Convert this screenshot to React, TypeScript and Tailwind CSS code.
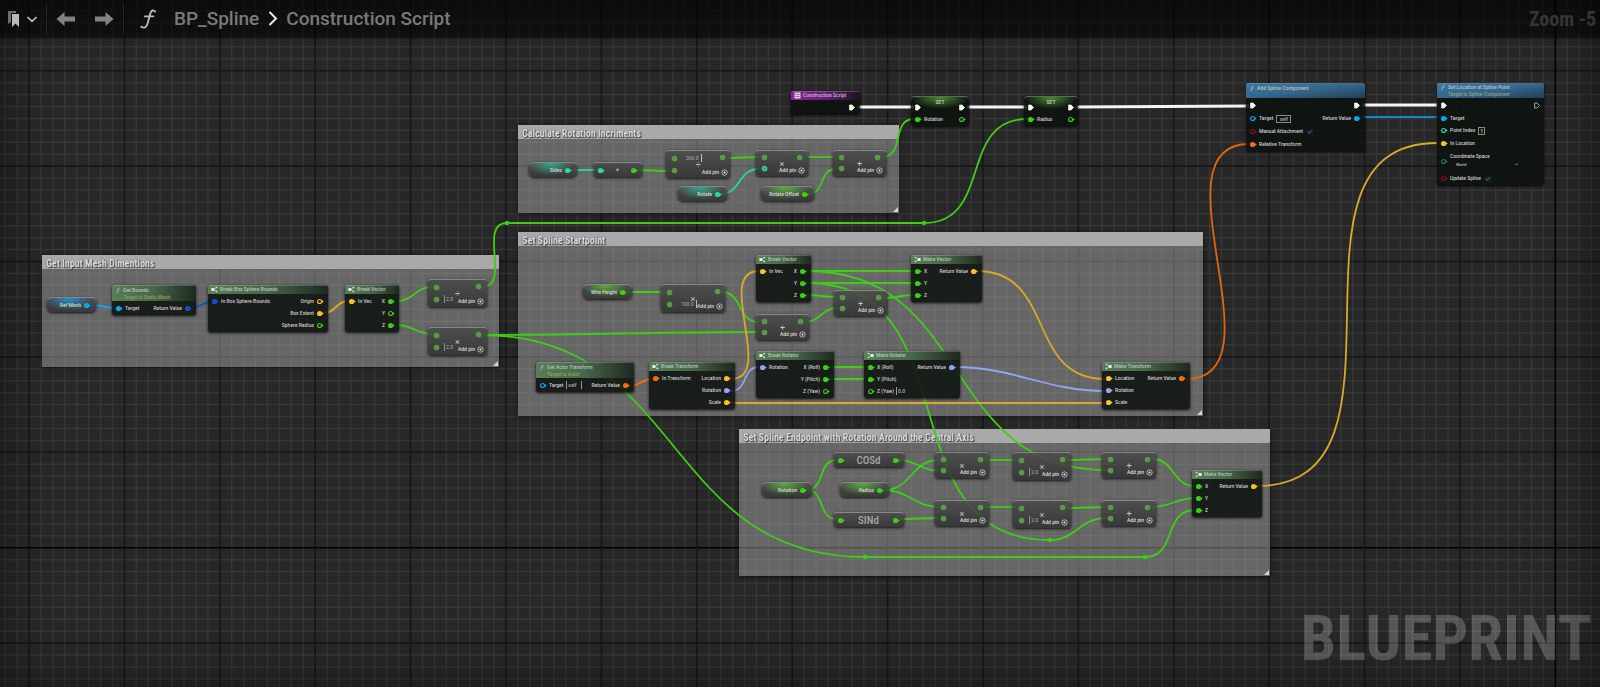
import { Check, ChevronDown } from 'lucide-react';
import type { ReactNode } from 'react';

const GREEN = '#3ccf13';
const TEAL = '#24d9a8';
const YELLOW = '#fbc226';
const WIRE_YELLOW = '#d9a928';
const PERIWINKLE = '#93a5f5';
const ORANGE = '#f56e0c';
const SKY = '#0da5f0';
const BLUE = '#0a56c8';
const RED = '#8c0b12';
const WHITE = '#f4f4f4';

type PinData = {
  label?: string;
  color: string;
  open?: boolean;
  exec?: boolean;
  field?: ReactNode;
};

type Row = { left?: PinData; right?: PinData };

// ---------- background grid ----------

const STEP = 11.925;

function Grid() {
  const lines = Array.from({ length: 320 }, (_, i) => i - 8);
  // the two origin axes are black, every eighth line is dark
  const tone = (i: number, axis: number) => (i === axis ? '#020202' : i % 8 === 0 ? '#171717' : '#363636');
  // thin lines first so the heavy ones stay on top
  const ordered = [...lines.filter((i) => i % 8 !== 0), ...lines.filter((i) => i % 8 === 0)];

  return (
    <svg className="absolute inset-0 h-full w-full" aria-hidden="true">
      {ordered.map((i) => (
        <g key={i} strokeWidth={i % 8 === 0 ? 1.6 : 1.5}>
          <line x1={29 + i * STEP} x2={29 + i * STEP} y1="0" y2="100%" stroke={tone(i, 128)} />
          <line x1="0" x2="100%" y1={70.7 + i * STEP} y2={70.7 + i * STEP} stroke={tone(i, 40)} />
        </g>
      ))}
    </svg>
  );
}

// ---------- wires ----------

type WireData = [x1: number, y1: number, x2: number, y2: number, color: string, width?: number];

const wires: WireData[] = [
  // exec line
  [858, 107, 914, 107, WHITE, 3],
  [967, 107, 1027, 107, WHITE, 3],
  [1076, 107, 1249, 106, WHITE, 3],
  [1363, 105, 1437, 105, WHITE, 3],
  [1362, 117, 1437, 117, '#118ac8'],
  // mesh dimensions
  [90, 305, 116, 308, SKY],
  [191, 308, 211, 302, BLUE],
  [324, 313, 348, 301, WIRE_YELLOW],
  [397, 301, 432, 287, GREEN],
  [397, 325, 432, 334, GREEN],
  [482, 287, 507, 223, GREEN],
  [507, 223, 924, 223, GREEN],
  [924, 223, 1027, 119, GREEN],
  [482, 335, 759, 332, GREEN],
  [482, 335, 865, 557, GREEN],
  [865, 557, 1145, 557, GREEN],
  [1145, 557, 1195, 510, GREEN],
  // rotation increments
  [571, 170, 598, 170, TEAL],
  [636, 170, 669, 171, GREEN],
  [726, 158, 759, 157, GREEN],
  [720, 194, 759, 169, TEAL],
  [804, 157, 836, 157, GREEN],
  [808, 194, 836, 169, GREEN],
  [882, 157, 914, 119, GREEN],
  // start point
  [627, 292, 664, 292, GREEN],
  [721, 292, 759, 322, GREEN],
  [805, 322, 837, 308, GREEN],
  [807, 271, 914, 271, GREEN],
  [807, 283, 914, 283, GREEN],
  [807, 295, 837, 297, GREEN],
  [883, 298, 914, 295, GREEN],
  [807, 271, 1106, 470, GREEN],
  [807, 283, 1050, 540, GREEN],
  [1050, 540, 1106, 518, GREEN],
  [630, 386, 652, 379, ORANGE],
  [731, 379, 759, 271, WIRE_YELLOW],
  [731, 391, 759, 367, PERIWINKLE],
  [731, 403, 1105, 403, WIRE_YELLOW],
  [830, 367, 866, 367, GREEN],
  [830, 379, 866, 379, GREEN],
  [977, 271, 1105, 379, WIRE_YELLOW],
  [955, 367, 1105, 391, PERIWINKLE],
  [1186, 379, 1249, 144, '#de660f'],
  // end point
  [806, 490, 837, 460, GREEN],
  [806, 490, 837, 519, GREEN],
  [899, 460, 939, 471, GREEN],
  [899, 519, 939, 518, GREEN],
  [884, 490, 939, 460, GREEN],
  [884, 490, 939, 507, GREEN],
  [985, 460, 1016, 460, GREEN],
  [985, 507, 1016, 507, GREEN],
  [1067, 460, 1106, 459, GREEN],
  [1067, 508, 1106, 507, GREEN],
  [1152, 459, 1195, 486, GREEN],
  [1152, 507, 1195, 498, GREEN],
  [1257, 486, 1437, 143, WIRE_YELLOW],
];

const knots = [
  [507, 223],
  [924, 223],
  [865, 557],
  [1145, 557],
  [1050, 540],
];

function wirePath([x1, y1, x2, y2]: WireData) {
  const t = (Math.abs(x2 - x1) + Math.abs(y2 - y1)) / 3;
  return `M${x1} ${y1} C${x1 + t} ${y1} ${x2 - t} ${y2} ${x2} ${y2}`;
}

function Wires() {
  return (
    <svg className="absolute inset-0 h-full w-full" aria-hidden="true">
      {wires.map((wire, i) => (
        <path key={i} d={wirePath(wire)} fill="none" stroke={wire[4]} strokeWidth={wire[5] ?? 1.8} />
      ))}
      {knots.map(([x, y]) => (
        <circle key={`${x}-${y}`} cx={x} cy={y} r="2.2" fill={GREEN} />
      ))}
    </svg>
  );
}

// ---------- pins ----------

function Pin({ color, open, exec }: { color: string; open?: boolean; exec?: boolean }) {
  if (exec) {
    return (
      <svg className="h-[7px] w-2 shrink-0" viewBox="0 0 8 7" aria-hidden="true">
        <path
          d="M1.6 1H4L6.5 3.5L4 6H1.6Z"
          fill={open ? 'none' : WHITE}
          stroke={open ? '#c4c4c4' : WHITE}
          strokeWidth="0.8"
          strokeLinejoin="round"
        />
      </svg>
    );
  }
  return (
    <svg className="h-[7px] w-2 shrink-0" viewBox="0 0 8 7" aria-hidden="true">
      <circle cx="3.6" cy="3.5" r={open ? 2 : 2.6} fill={open ? 'none' : color} stroke={color} strokeWidth={open ? 1.1 : 0} />
      <path d="M6 2.2L7.8 3.5L6 4.8Z" fill={color} />
    </svg>
  );
}

// wildcard style pin used by the compact math nodes
function MathPin({ color = '#45a92a' }: { color?: string }) {
  return (
    <svg className="h-[7px] w-[7px] shrink-0" viewBox="0 0 7 7" aria-hidden="true">
      <circle cx="3.5" cy="3.5" r="2.2" fill="#7d7d7d" stroke={color} strokeWidth="1.3" />
    </svg>
  );
}

// ---------- comment boxes ----------

const comments = [
  { title: 'Get Input Mesh Dimentions', x: 42, y: 255, w: 457, h: 112 },
  { title: 'Calculate Rotation Incriments', x: 518, y: 125, w: 381, h: 88 },
  { title: 'Set Spline Startpoint', x: 518, y: 232, w: 685, h: 184 },
  { title: 'Set Spline Endpoint with Rotation Around the Central Axis', x: 739, y: 429, w: 531, h: 147 },
];

function Comment({ title, x, y, w, h }: (typeof comments)[number]) {
  return (
    <section
      className="absolute flex flex-col bg-[#b4b4b4]/45 shadow-[0_1px_4px_rgba(0,0,0,0.7)]"
      style={{ left: x, top: y, width: w, height: h }}
    >
      <h2 className="h-[14px] bg-[#a9a9a9] px-1 pt-0.5 font-['Roboto_Condensed','Liberation_Sans_Narrow',Roboto,sans-serif] text-[10px] leading-[14px] font-bold whitespace-nowrap text-[#dedede] [text-shadow:1px_1px_1px_#333,0_0_1px_#444]">
        {title}
      </h2>
      <svg className="mt-auto mr-px mb-px h-[5px] w-[5px] self-end" viewBox="0 0 5 5" aria-hidden="true">
        <path d="M5 0V5H0Z" fill="#d6d6d6" />
      </svg>
    </section>
  );
}

// ---------- regular nodes ----------

function NodeIcon({ kind }: { kind: 'break' | 'make' | 'fn' | 'event' }) {
  if (kind === 'fn') {
    return (
      <svg className="h-[7px] w-[6px] shrink-0" viewBox="0 0 6 7" aria-hidden="true">
        <path d="M4.8 1C3.6 .6 3.3 1.6 3 3.2C2.7 5 2.4 6.3 1 6M1.7 3H4.4" fill="none" stroke="#8cc0d8" strokeWidth="0.8" />
      </svg>
    );
  }
  if (kind === 'event') {
    return (
      <svg className="h-[7px] w-[7px] shrink-0" viewBox="0 0 7 7" aria-hidden="true">
        <rect x="0.5" y="0.5" width="6" height="6" fill="#e3cfe8" />
        <path d="M1.5 2.5H5.5M1.5 4.5H5.5" stroke="#8d4a9c" strokeWidth="0.8" />
      </svg>
    );
  }
  return (
    <svg className="h-[7px] w-[7px] shrink-0" viewBox="0 0 7 7" aria-hidden="true">
      {kind === 'break' ? (
        <g fill="#f4f4f4">
          <rect x="0.4" y="2.1" width="3" height="2.8" />
          <path d="M3.4 3.2L5 1.6M3.4 3.8L5 5.4" stroke="#f4f4f4" strokeWidth="0.6" />
          <rect x="4.8" y="0.9" width="1.3" height="1.3" />
          <rect x="4.8" y="4.8" width="1.3" height="1.3" />
        </g>
      ) : (
        <g fill="#f4f4f4">
          <rect x="3.6" y="2.1" width="3" height="2.8" />
          <path d="M3.6 3.2L2 1.6M3.6 3.8L2 5.4" stroke="#f4f4f4" strokeWidth="0.6" />
          <rect x="0.8" y="0.9" width="1.3" height="1.3" />
          <rect x="0.8" y="4.8" width="1.3" height="1.3" />
        </g>
      )}
    </svg>
  );
}

const headTones = {
  green: 'bg-linear-to-r from-[#587f57] via-[#47664a] to-[#1d2a1e]',
  blue: 'bg-linear-to-br from-[#3f789f] via-[#35658b] to-[#1f3f57]',
  purple: 'bg-linear-to-r from-[#8b1fa4] via-[#6b1b7e] to-[#1c1020]',
};

const shell = 'rounded-[2px] bg-[#0c120e]/86 text-[5px] leading-[7px] font-medium text-[#cecece] shadow-[0_1px_3px_rgba(0,0,0,0.9)]';

type NodeData = {
  title: string;
  subtitle?: string;
  kind: 'break' | 'make' | 'fn' | 'event';
  tone?: keyof typeof headTones;
  x: number;
  y: number;
  w: number;
  rows: Row[];
};

function BlueprintNode({ title, subtitle, kind, tone = 'green', x, y, w, rows }: NodeData) {
  const blue = tone === 'blue';
  const height = blue ? 'h-[15px] pt-px' : subtitle ? 'h-4 pt-px' : 'h-[9px]';
  return (
    <article className={`absolute ${shell} ${blue ? '' : 'pb-px'}`} style={{ left: x, top: y, width: w }}>
      <header className={`flex items-start gap-0.5 rounded-t-[2px] border-t border-white/20 pr-1 pl-[3px] ${height} ${headTones[tone]}`}>
        <NodeIcon kind={kind} />
        <h3 className="whitespace-nowrap text-[#b9c4b9]">
          {title}
          {subtitle && <small className="block text-[5px] text-[#93a05e]">{subtitle}</small>}
        </h3>
      </header>
      <div className="pt-px">
        {rows.map((row, i) => (
          <div key={i} className={`flex items-center justify-between pr-1 pl-[3px] ${blue ? 'h-[13px]' : 'h-3'}`}>
            <div className="flex items-center gap-0.5 whitespace-nowrap">
              {row.left && <Pin {...row.left} />}
              {row.left?.label && <span>{row.left.label}</span>}
              {row.left?.field}
            </div>
            <div className="flex items-center gap-0.5 whitespace-nowrap">
              {row.right?.label && <span>{row.right.label}</span>}
              {row.right && <Pin {...row.right} />}
            </div>
          </div>
        ))}
      </div>
    </article>
  );
}

function ValueField({ label, value, look }: { label: string; value: string; look: 'box' | 'wide' | 'short' }) {
  const looks = {
    box: 'ml-px w-[15px] border border-[#8a8a8a] text-center leading-[6px]',
    wide: 'ml-px w-4 border-x border-[#9a9a9a] pl-px leading-[7px]',
    short: 'w-[11px] border-l border-[#9a9a9a] pl-px leading-[7px]',
  };
  return (
    <input aria-label={label} defaultValue={value} className={`h-2 bg-transparent text-[5px] text-[#b2b2b2] ${looks[look]}`} />
  );
}

function Tick({ label }: { label: string }) {
  return (
    <span className="relative ml-0.5 inline-flex h-[6px] w-[6px]">
      <input type="checkbox" aria-label={label} defaultChecked className="h-[6px] w-[6px] appearance-none bg-[#1a1a1a]" />
      <Check className="pointer-events-none absolute inset-0 h-[6px] w-[6px] text-[#1285ea]" strokeWidth={4} />
    </span>
  );
}

function SpaceSelect() {
  return (
    <label className="mt-[7px] flex flex-col">
      <span>Coordinate Space</span>
      <span className="relative ml-[3px] flex items-center">
        <select
          className="h-[9px] w-[70px] appearance-none bg-[#101310] pl-[3px] text-[4px] leading-[9px] text-[#c0c0c0]"
          defaultValue="World"
        >
          <option>World</option>
          <option>Local</option>
        </select>
        <ChevronDown className="pointer-events-none absolute right-1 h-[5px] w-[5px]" strokeWidth={3} />
      </span>
    </label>
  );
}

const g = (label: string, open?: boolean): PinData => ({ label, color: GREEN, open });
const vec = (label: string, open?: boolean): PinData => ({ label, color: YELLOW, open });
const rot = (label: string): PinData => ({ label, color: PERIWINKLE });
const xf = (label: string): PinData => ({ label, color: ORANGE });
const exec: PinData = { color: WHITE, exec: true };

const nodes: NodeData[] = [
  {
    title: 'Get Bounds',
    subtitle: 'Target is Static Mesh',
    kind: 'fn',
    x: 112,
    y: 285,
    w: 84,
    rows: [{ left: { label: 'Target', color: SKY }, right: { label: 'Return Value', color: BLUE } }],
  },
  {
    title: 'Break Box Sphere Bounds',
    kind: 'break',
    x: 208,
    y: 285,
    w: 120,
    rows: [
      { left: { label: 'In Box Sphere Bounds', color: BLUE }, right: vec('Origin', true) },
      { right: vec('Box Extent') },
      { right: g('Sphere Radius', true) },
    ],
  },
  {
    title: 'Break Vector',
    kind: 'break',
    x: 345,
    y: 285,
    w: 54,
    rows: [{ left: vec('In Vec'), right: g('X') }, { right: g('Y', true) }, { right: g('Z') }],
  },
  {
    title: 'Break Vector',
    kind: 'break',
    x: 756,
    y: 255,
    w: 55,
    rows: [{ left: vec('In Vec'), right: g('X') }, { right: g('Y') }, { right: g('Z') }],
  },
  {
    title: 'Make Vector',
    kind: 'make',
    x: 911,
    y: 255,
    w: 71,
    rows: [{ left: g('X'), right: vec('Return Value') }, { left: g('Y') }, { left: g('Z') }],
  },
  {
    title: 'Get Actor Transform',
    subtitle: 'Target is Actor',
    kind: 'fn',
    x: 536,
    y: 362,
    w: 98,
    rows: [
      {
        left: { label: 'Target', color: SKY, open: true, field: <ValueField label="Target actor" value="self" look="wide" /> },
        right: xf('Return Value'),
      },
    ],
  },
  {
    title: 'Break Transform',
    kind: 'break',
    x: 649,
    y: 362,
    w: 86,
    rows: [{ left: xf('In Transform'), right: vec('Location') }, { right: rot('Rotation') }, { right: vec('Scale') }],
  },
  {
    title: 'Break Rotator',
    kind: 'break',
    x: 756,
    y: 351,
    w: 78,
    rows: [{ left: rot('Rotation'), right: g('X (Roll)') }, { right: g('Y (Pitch)') }, { right: g('Z (Yaw)', true) }],
  },
  {
    title: 'Make Rotator',
    kind: 'make',
    x: 864,
    y: 351,
    w: 96,
    rows: [
      { left: g('X (Roll)'), right: rot('Return Value') },
      { left: g('Y (Pitch)') },
      { left: { ...g('Z (Yaw)', true), field: <ValueField label="Yaw" value="0.0" look="short" /> } },
    ],
  },
  {
    title: 'Make Transform',
    kind: 'make',
    x: 1102,
    y: 362,
    w: 88,
    rows: [{ left: vec('Location'), right: xf('Return Value') }, { left: rot('Rotation') }, { left: vec('Scale') }],
  },
  {
    title: 'Make Vector',
    kind: 'make',
    x: 1192,
    y: 470,
    w: 70,
    rows: [{ left: g('X'), right: vec('Return Value') }, { left: g('Y') }, { left: g('Z') }],
  },
  {
    title: 'Construction Script',
    kind: 'event',
    tone: 'purple',
    x: 791,
    y: 91,
    w: 69,
    rows: [{ right: exec }],
  },
  {
    title: 'Add Spline Component',
    kind: 'fn',
    tone: 'blue',
    x: 1246,
    y: 83,
    w: 119,
    rows: [
      { left: exec, right: exec },
      {
        left: { label: 'Target', color: SKY, open: true, field: <ValueField label="Spline target" value="self" look="box" /> },
        right: { label: 'Return Value', color: SKY },
      },
      { left: { label: 'Manual Attachment', color: RED, open: true, field: <Tick label="Manual Attachment" /> } },
      { left: xf('Relative Transform') },
    ],
  },
];

// ---------- spline point node, has its own body because of the drop-down ----------

function SplinePointNode() {
  return (
    <article className={`absolute top-[83px] left-[1437px] w-[107px] ${shell}`}>
      <header className={`flex h-[15px] items-start gap-0.5 rounded-t-[2px] border-t border-white/20 px-[3px] ${headTones.blue}`}>
        <NodeIcon kind="fn" />
        <h3 className="whitespace-nowrap text-[#b9c4c9]">
          Set Location at Spline Point
          <small className="block text-[5px] text-[#8ba387]">Target is Spline Component</small>
        </h3>
      </header>
      <div className="px-[3px] pt-px">
        <div className="flex h-[13px] items-center justify-between">
          <Pin color={WHITE} exec />
          <Pin color={WHITE} exec open />
        </div>
        <div className="flex h-3 items-center gap-0.5">
          <Pin color={SKY} />
          <span>Target</span>
        </div>
        <div className="flex h-[13px] items-center gap-0.5">
          <Pin color={TEAL} open />
          <label htmlFor="point-index">Point Index</label>
          <input
            id="point-index"
            defaultValue="1"
            className="ml-px h-2 w-[7px] border border-[#8a8a8a] bg-transparent text-center text-[5px] leading-[6px]"
          />
        </div>
        <div className="flex h-[13px] items-center gap-0.5">
          <Pin color={YELLOW} />
          <span>In Location</span>
        </div>
        <div className="flex h-[22px] items-center gap-0.5">
          <Pin color="#0d7f68" open />
          <div className="-mt-2">
            <SpaceSelect />
          </div>
        </div>
        <div className="flex h-[13px] items-center gap-0.5">
          <Pin color={RED} open />
          <span>Update Spline</span>
          <Tick label="Update Spline" />
        </div>
      </div>
    </article>
  );
}

// ---------- variable getters and setters ----------

const glows: Record<string, string> = {
  [GREEN]: 'bg-[radial-gradient(ellipse_at_45%_0%,rgba(90,200,55,0.8),transparent_62%)]',
  [TEAL]: 'bg-[radial-gradient(ellipse_at_45%_0%,rgba(40,200,160,0.75),transparent_62%)]',
  [SKY]: 'bg-[radial-gradient(ellipse_at_45%_0%,rgba(20,160,230,0.8),transparent_62%)]',
};

const getters = [
  { label: 'Ref Mesh', color: SKY, x: 47, y: 297, w: 49 },
  { label: 'Sides', color: TEAL, x: 529, y: 162, w: 48 },
  { label: 'Rotate', color: TEAL, x: 678, y: 186, w: 49 },
  { label: 'Rotate Offset', color: GREEN, x: 761, y: 186, w: 53 },
  { label: 'Wire Height', color: GREEN, x: 583, y: 284, w: 49 },
  { label: 'Rotation', color: GREEN, x: 762, y: 482, w: 50 },
  { label: 'Radius', color: GREEN, x: 840, y: 482, w: 49 },
];

const plate =
  'border-t border-white/40 bg-linear-to-b from-[#4a4a4a]/85 to-[#303030]/85 shadow-[0_1px_3px_rgba(0,0,0,0.85)]';

function Getter({ label, color, x, y, w }: (typeof getters)[number]) {
  return (
    <div className={`absolute h-[15px] overflow-hidden rounded-[5px] ${plate}`} style={{ left: x, top: y, width: w }}>
      <div
        className={`flex h-full items-center justify-end gap-0.5 pr-[5px] text-[5px] leading-[7px] font-medium text-[#d8d8d8] ${glows[color]}`}
      >
        <span className="whitespace-nowrap">{label}</span>
        <Pin color={color} />
      </div>
    </div>
  );
}

const setters = [
  { label: 'Rotation', x: 911, w: 58 },
  { label: 'Radius', x: 1024, w: 54 },
];

function Setter({ label, x, w }: (typeof setters)[number]) {
  return (
    <div
      className="absolute top-[96px] overflow-hidden rounded-[4px] border-t border-white/35 bg-[#0c120e]/86 shadow-[0_1px_3px_rgba(0,0,0,0.85)]"
      style={{ left: x, width: w }}
    >
      <div className="bg-[radial-gradient(ellipse_at_50%_0%,rgba(80,180,50,0.8),transparent_70%)] bg-size-[100%_12px] bg-no-repeat pb-px text-[5px] leading-[7px] font-medium text-[#cecece]">
        <h3 className="h-[5px] pt-0.5 text-center">SET</h3>
        <div className="flex h-[11px] items-center justify-between px-[3px]">
          <Pin color={WHITE} exec />
          <Pin color={WHITE} exec />
        </div>
        <div className="flex h-3 items-center justify-between px-[3px]">
          <div className="flex items-center gap-0.5">
            <Pin color={GREEN} />
            <span>{label}</span>
          </div>
          <Pin color={GREEN} open />
        </div>
      </div>
    </div>
  );
}

// ---------- compact math nodes ----------

type MathData = {
  symbol: '×' | '÷' | '+';
  x: number;
  y: number;
  w: number;
  value?: string;
  valueFirst?: boolean;
  lower?: string;
};

const maths: MathData[] = [
  { symbol: '÷', x: 428, y: 279, w: 59, value: '2.0' },
  { symbol: '×', x: 428, y: 327, w: 59, value: '2.0' },
  { symbol: '÷', x: 666, y: 150, w: 64, value: '360.0', valueFirst: true },
  { symbol: '×', x: 756, y: 150, w: 52, lower: TEAL },
  { symbol: '+', x: 833, y: 150, w: 53 },
  { symbol: '×', x: 661, y: 284, w: 64, value: '100.0' },
  { symbol: '+', x: 756, y: 314, w: 53 },
  { symbol: '+', x: 834, y: 290, w: 53 },
  { symbol: '×', x: 935, y: 452, w: 54 },
  { symbol: '×', x: 935, y: 500, w: 54 },
  { symbol: '×', x: 1013, y: 452, w: 58, value: '2.0' },
  { symbol: '×', x: 1013, y: 500, w: 58, value: '2.0' },
  { symbol: '+', x: 1102, y: 452, w: 54 },
  { symbol: '+', x: 1102, y: 500, w: 54 },
];

function MathNode({ symbol, x, y, w, value, valueFirst, lower }: MathData) {
  const wide = value && value.length > 3;
  const row = value ? 'flex h-3 items-center gap-1' : 'flex h-[11px] items-center gap-1';
  const field = value && (
    <input
      aria-label="Operand"
      defaultValue={value}
      className={
        wide
          ? 'ml-1 h-2 w-4 border-r border-[#c0c0c0] bg-transparent text-[5px] leading-[7px] text-[#b0b0b0]'
          : 'h-2 w-[11px] border-l border-[#8c8c8c] bg-transparent pl-px text-[5px] leading-[7px] text-[#b0b0b0]'
      }
    />
  );
  return (
    <div
      className={`absolute flex justify-between rounded-[3px] pt-px pr-1 pl-[5px] ${value ? 'h-7' : 'h-[26px]'} ${plate}`}
      style={{ left: x, top: y, width: w }}
    >
      <div>
        <div className={row}>
          <MathPin />
          {valueFirst && field}
        </div>
        <div className={row}>
          <MathPin color={lower} />
          {!valueFirst && field}
        </div>
      </div>
      <span className="absolute inset-0 flex items-center justify-center pt-0.5 text-[9px] leading-[9px] text-[#c6c6c6]">{symbol}</span>
      <div className="relative flex flex-col items-end justify-between pb-[2px]">
        <div className="flex h-[11px] items-center pr-px">
          <MathPin />
        </div>
        <button className="-mr-px flex items-center gap-0.5 text-[5px] leading-[7px] font-medium whitespace-nowrap text-[#dcdcdc]">
          Add pin
          <svg className="h-[7px] w-[7px]" viewBox="0 0 7 7" aria-hidden="true">
            <circle cx="3.5" cy="3.5" r="2.7" fill="none" stroke="#d4d4d4" strokeWidth="0.8" />
            <path d="M2.2 3.5H4.8M3.5 2.2V4.8" stroke="#d4d4d4" strokeWidth="0.8" />
          </svg>
        </button>
      </div>
    </div>
  );
}

// cast / trig nodes: one pin in, one pin out
const unaries = [
  { label: '•', from: TEAL, x: 594, y: 162, w: 48 },
  { label: 'COSd', from: GREEN, x: 834, y: 452, w: 70 },
  { label: 'SINd', from: GREEN, x: 834, y: 512, w: 70 },
];

function UnaryNode({ label, from, x, y, w }: (typeof unaries)[number]) {
  return (
    <div
      className={`absolute flex h-[15px] items-center justify-between rounded-[3px] pr-1 pl-[3px] ${plate}`}
      style={{ left: x, top: y, width: w }}
    >
      <Pin color={from} />
      <span className="font-['Roboto_Condensed','Liberation_Sans_Narrow',Roboto,sans-serif] text-[11px] leading-[11px] font-medium text-[#a6a6a6]">
        {label}
      </span>
      <Pin color={GREEN} />
    </div>
  );
}

// ---------- toolbar ----------

function Arrow({ flip }: { flip?: boolean }) {
  return (
    <svg className={`h-4 w-5 ${flip ? 'rotate-180' : ''}`} viewBox="0 0 20 16" aria-hidden="true">
      <path d="M.5 8L8.5 1V5.6H19V10.4H8.5V15Z" fill="#838383" />
    </svg>
  );
}

function Toolbar() {
  return (
    <header className="relative z-10 flex h-[37px] items-center self-start bg-black/60 pl-2 shadow-[0_1px_2px_rgba(0,0,0,0.6)] [grid-area:1/1]">
      <button className="flex items-center gap-1.5" aria-label="Bookmarks">
        <svg className="h-4 w-3" viewBox="0 0 12 16" aria-hidden="true">
          <path d="M0 0H8V2H3V11L0 13Z" fill="#6f6f6f" />
          <path d="M4 3H11V16L7.5 12.5L4 16Z" fill="#b9b9b9" />
        </svg>
        <svg className="h-2 w-3" viewBox="0 0 12 8" aria-hidden="true">
          <path d="M1.5 2L6 6.3L10.5 2" fill="none" stroke="#bdbdbd" strokeWidth="1.7" />
        </svg>
      </button>
      <span className="mr-[9px] ml-2 h-8 w-px bg-[#232323]" />
      <button aria-label="Back">
        <Arrow />
      </button>
      <button className="ml-[18px]" aria-label="Forward">
        <Arrow flip />
      </button>
      <span className="mr-4 ml-[9px] h-8 w-px bg-[#232323]" />
      <svg className="h-5 w-4" viewBox="0 0 16 20" aria-hidden="true">
        <path
          d="M15 2.6C13.6 .6 11.2 1 10.3 4.4L7.6 14.4C6.8 18 4.4 19.8 1.2 17.8M4.8 7.4H13.4"
          fill="none"
          stroke="#b8b8b8"
          strokeWidth="1.9"
          strokeLinecap="round"
        />
      </svg>
      <nav className="ml-[18px] flex items-center text-[19px] leading-6 font-medium text-[#7a7a7a]" aria-label="Breadcrumb">
        <a href="#bp-spline">BP_Spline</a>
        <svg className="mr-2 ml-[9px] h-[15px] w-[10px]" viewBox="0 0 10 15" aria-hidden="true">
          <path d="M1.5 1L8 7.5L1.5 14" fill="none" stroke="#ececec" strokeWidth="2" />
        </svg>
        <a href="#construction-script">Construction Script</a>
      </nav>
      <span className="mr-1 ml-auto font-['Roboto_Condensed','Liberation_Sans_Narrow',Roboto,sans-serif] text-[20px] leading-6 font-bold text-[#363636]">
        Zoom -5
      </span>
    </header>
  );
}

export default function App() {
  return (
    <div className="relative grid h-screen min-h-[600px] overflow-hidden bg-[#272727] font-[Roboto,sans-serif]">
      <Grid />
      <main className="relative overflow-hidden [grid-area:1/1]">
        {comments.map((c) => (
          <Comment key={c.title} {...c} />
        ))}
        <Wires />
        {nodes.map((n, i) => (
          <BlueprintNode key={i} {...n} />
        ))}
        <SplinePointNode />
        {getters.map((n) => (
          <Getter key={n.label} {...n} />
        ))}
        {setters.map((n) => (
          <Setter key={n.label} {...n} />
        ))}
        {maths.map((n, i) => (
          <MathNode key={i} {...n} />
        ))}
        {unaries.map((n) => (
          <UnaryNode key={n.label} {...n} />
        ))}
        <p className="absolute right-2 bottom-3 font-['Roboto_Condensed','Liberation_Sans_Narrow',Roboto,sans-serif] text-[63px] leading-[72px] font-bold text-white/22">
          BLUEPRINT
        </p>
        <div className="pointer-events-none absolute inset-0 shadow-[inset_0_0_48px_rgba(0,0,0,0.5)]" />
      </main>
      <Toolbar />
    </div>
  );
}
